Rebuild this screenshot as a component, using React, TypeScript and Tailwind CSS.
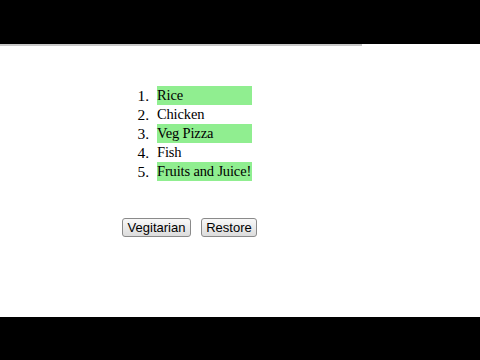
const foods = [
  { name: 'Rice', veg: true },
  { name: 'Chicken', veg: false },
  { name: 'Veg Pizza', veg: true },
  { name: 'Fish', veg: false },
  { name: 'Fruits and Juice!', veg: true },
];

export default function App() {
  return (
    <div className="w-[480px] h-[360px] flex flex-col bg-white overflow-hidden">
      {/* top letterbox */}
      <div className="h-[44px] bg-black shrink-0" />
      <div className="h-[2px] w-[362px] bg-[#c8c8c8] shrink-0" />

      <div className="flex-1 flex flex-col pl-[122px] pt-[40px]">
        {/* food list */}
        <ol className="flex flex-col font-['Liberation_Serif',serif] text-[14.5px] leading-[19px] text-black">
          {foods.map((f, i) => (
            <li key={f.name} className="flex">
              <span className="w-[27px] text-right text-[15.5px]">{i + 1}.</span>
              <span
                className={
                  f.veg
                    ? 'ml-[8px] w-[95px] whitespace-nowrap tracking-[-0.15px] bg-[#90ee90]'
                    : 'ml-[8px] w-[95px] whitespace-nowrap tracking-[-0.15px]'
                }
              >
                {f.name}
              </span>
            </li>
          ))}
        </ol>

        {/* buttons */}
        <div className="flex gap-[10px] mt-[37px] font-['Liberation_Sans',sans-serif] text-[13px]">
          <button className="h-[19px] w-[69px] border border-[#8a8a8a] rounded-[3px] bg-gradient-to-b from-[#f8f8f8] to-[#dcdcdc] leading-[17px] text-black">
            Vegitarian
          </button>
          <button className="h-[19px] w-[56px] border border-[#8a8a8a] rounded-[3px] bg-gradient-to-b from-[#f8f8f8] to-[#dcdcdc] leading-[17px] text-black">
            Restore
          </button>
        </div>
      </div>

      {/* bottom letterbox */}
      <div className="h-[43px] bg-black shrink-0" />
    </div>
  );
}
